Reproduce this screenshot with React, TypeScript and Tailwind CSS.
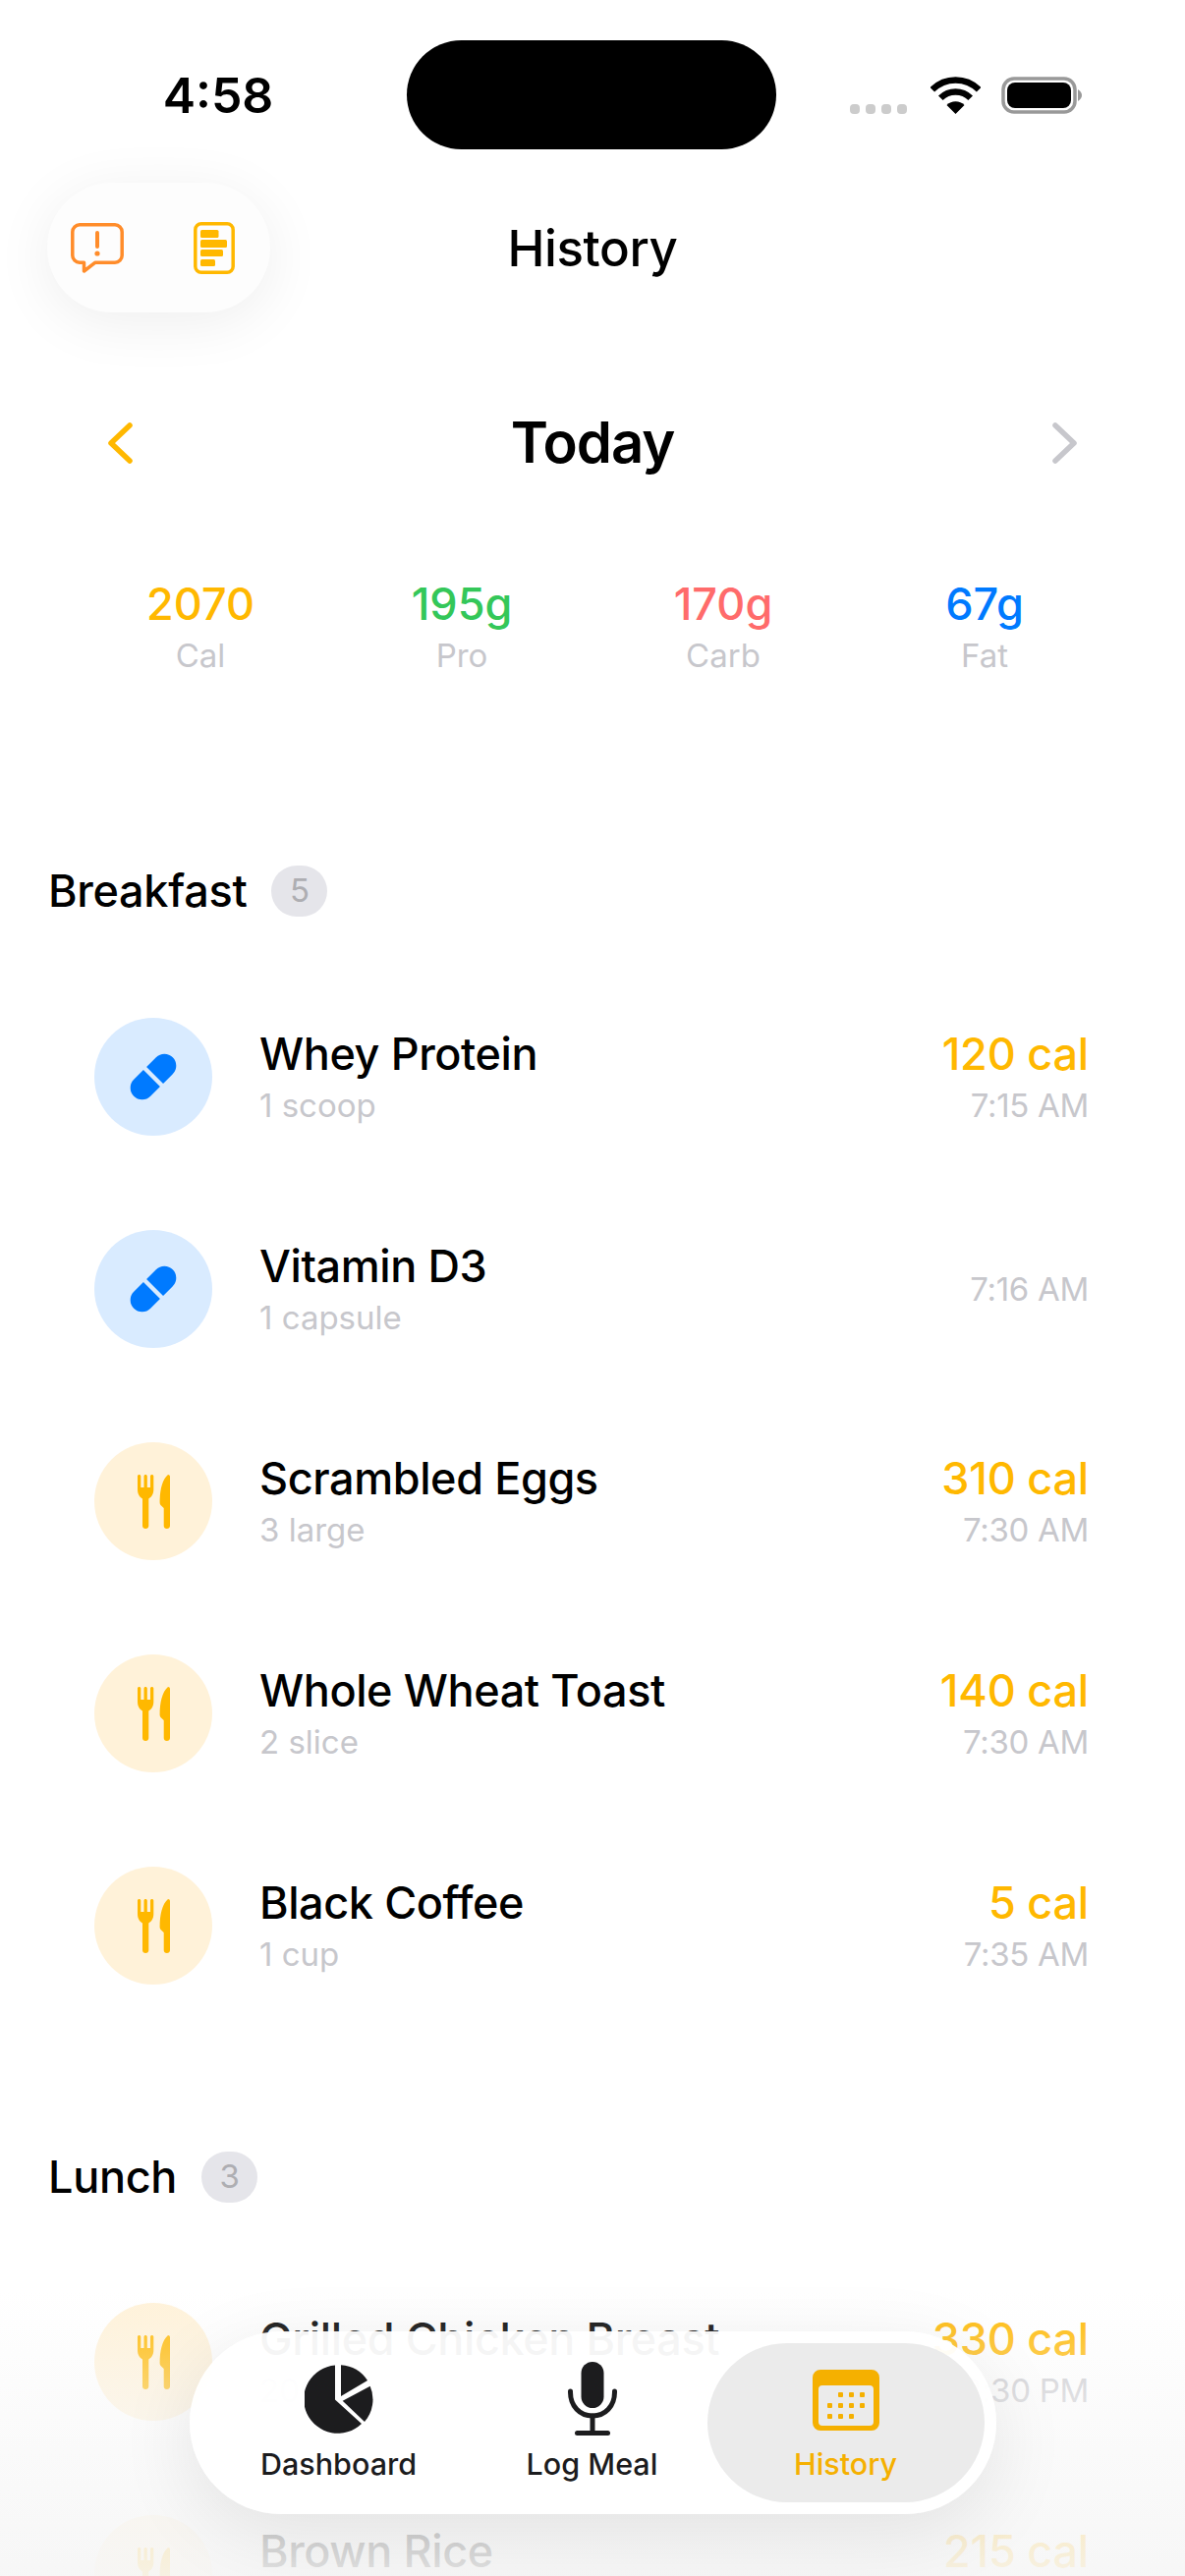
const breakfast = [
  { kind: 'pill', name: 'Whey Protein', sub: '1 scoop', cal: '120 cal', time: '7:15 AM' },
  { kind: 'pill', name: 'Vitamin D3', sub: '1 capsule', cal: '', time: '7:16 AM' },
  { kind: 'food', name: 'Scrambled Eggs', sub: '3 large', cal: '310 cal', time: '7:30 AM' },
  { kind: 'food', name: 'Whole Wheat Toast', sub: '2 slice', cal: '140 cal', time: '7:30 AM' },
  { kind: 'food', name: 'Black Coffee', sub: '1 cup', cal: '5 cal', time: '7:35 AM' },
];

const lunch = [
  { kind: 'food', name: 'Grilled Chicken Breast', sub: '200g', cal: '330 cal', time: '12:30 PM' },
  { kind: 'food', name: 'Brown Rice', sub: '1 cup', cal: '215 cal', time: '12:30 PM' },
];

const stats = [
  { value: '2070', label: 'Cal', color: 'text-[#ffb800]' },
  { value: '195g', label: 'Pro', color: 'text-[#34c759]' },
  { value: '170g', label: 'Carb', color: 'text-[#ff6b6b]' },
  { value: '67g', label: 'Fat', color: 'text-[#007aff]' },
];

function PillIcon() {
  return (
    <svg width="60" height="60" viewBox="-30 -30 60 60" fill="#007aff">
      <g transform="rotate(-45)">
        <path d="M-2.2 -12 H-16 A12 12 0 0 0 -16 12 H-2.2 Z" />
        <path d="M2.2 -12 H16 A12 12 0 0 1 16 12 H2.2 Z" />
      </g>
    </svg>
  );
}

function FoodIcon() {
  return (
    <svg width="33" height="55" viewBox="0 0 33 55" fill="#ffb800">
      <path d="M0 1.6 C0 .7 .7 0 1.6 0 S3.3 .7 3.3 1.6 V13 H6.5 V1.6 C6.5 .7 7.2 0 8.1 0 S9.8 .7 9.8 1.6 V13 H13 V1.6 C13 .7 13.7 0 14.6 0 S16.3 .7 16.3 1.6 V15 C16.3 20 14 23 11.3 24.5 V52 C11.3 53.7 10 55 8.2 55 S5 53.7 5 52 V24.5 C2.3 23 0 20 0 15 Z" />
      <path d="M31 0 C32.2 0 33 .8 33 2 V52 C33 53.7 31.6 55 29.8 55 S26.7 53.7 26.7 52 V34 L24 31.5 C23 30.5 22.6 29.5 22.6 28 C22.6 16 25 5 31 0 Z" />
    </svg>
  );
}

function MealRow({ item }: { item: (typeof breakfast)[number] }) {
  const isPill = item.kind === 'pill';
  return (
    <div className="flex h-[216px] items-center pl-[96px] pr-[98px]">
      <div className={`flex h-[120px] w-[120px] shrink-0 items-center justify-center rounded-full ${isPill ? 'bg-[#d9ebff]' : 'bg-[#fff2d9]'}`}>
        {isPill ? <PillIcon /> : <FoodIcon />}
      </div>
      <div className="ml-[48px] flex-1">
        <div className="text-[45px] leading-[52px] font-[550] tracking-[-0.4px] text-black">{item.name}</div>
        <div className="mt-[6px] text-[33px] leading-[40px] text-[#c7c7cc]">{item.sub}</div>
      </div>
      <div className="flex flex-col items-end">
        {item.cal && <div className="text-[45px] leading-[52px] font-[550] tracking-[-0.2px] text-[#ffb800]">{item.cal}</div>}
        <div className={`text-[33px] leading-[40px] tracking-[-0.3px] text-[#c7c7cc] ${item.cal ? 'mt-[6px]' : ''}`}>{item.time}</div>
      </div>
    </div>
  );
}

function SectionHeader({ title, count }: { title: string; count: number }) {
  return (
    <div className="flex items-center pl-[49px]">
      <span className="text-[45px] leading-[52px] font-[550] tracking-[-0.3px] text-black">{title}</span>
      <span className="ml-[25px] flex h-[52px] w-[57px] items-center justify-center rounded-full bg-[#e5e5ea] text-[33px] text-[#aeaeb2]">{count}</span>
    </div>
  );
}

function NavTab({ label, active, children }: { label: string; active?: boolean; children: React.ReactNode }) {
  return (
    <div className={`flex h-[162px] flex-col items-center justify-end pb-[21px] rounded-full ${active ? 'bg-[#ebebeb]' : ''}`}>
      <div className="flex h-[80px] items-center justify-center">{children}</div>
      <div className={`mt-[8px] text-[30.5px] leading-[36px] font-medium ${active ? 'text-[#f5b000]' : 'text-[#1c1c1e]'}`}>{label}</div>
    </div>
  );
}

export default function App() {
  return (
    <div className="relative h-[2622px] w-[1206px] overflow-hidden bg-white font-[Inter,sans-serif]">
      {/* Status bar */}
      <div className="mt-[41px] flex h-[111px] items-center">
        <div className="w-[414px] pl-[30px] text-center text-[50px] leading-none font-semibold text-black">4:58</div>
        <div className="h-[111px] w-[376px] rounded-[56px] bg-black" />
        <div className="flex flex-1 items-end pl-[75px]">
          <div className="flex gap-[6px]">
            <div className="h-[10px] w-[10px] rounded-[4px] bg-[#cccccc]" />
            <div className="h-[10px] w-[10px] rounded-[4px] bg-[#cccccc]" />
            <div className="h-[10px] w-[10px] rounded-[4px] bg-[#cccccc]" />
            <div className="h-[10px] w-[10px] rounded-[4px] bg-[#cccccc]" />
          </div>
          <svg className="ml-[24px]" width="51" height="38" viewBox="0 0 51 38" fill="none" stroke="#000" strokeWidth="6.5">
            <path d="M1.8 13.3 A33.5 33.5 0 0 1 49.2 13.3" />
            <path d="M10.3 21.8 A21.5 21.5 0 0 1 40.7 21.8" />
            <path d="M25.5 38 L16.5 29 A12.7 12.7 0 0 1 34.5 29 Z" fill="#000" stroke="none" />
          </svg>
          <svg className="ml-[21px]" width="82" height="38" viewBox="0 0 82 38">
            <rect x="2" y="2" width="73" height="34" rx="11" fill="none" stroke="#999999" strokeWidth="3.5" />
            <rect x="6" y="6" width="65" height="26" rx="8" fill="#000" />
            <path d="M78 13 C81 15 82 17 82 19 S81 23 78 25 Z" fill="#999999" />
          </svg>
        </div>
      </div>

      {/* Header */}
      <div className="mt-[34px] grid grid-cols-3 items-center pl-[48px]">
        <div className="flex h-[132px] w-[227px] items-center rounded-full bg-[#fdfdfd] pl-[24px] shadow-[0_10px_60px_rgba(0,0,0,0.07)]">
          <svg width="54" height="51" viewBox="0 0 54 51" fill="none">
            <path d="M9 1.8 H45 C49 1.8 52.2 5 52.2 9 V33 C52.2 37 49 40.2 45 40.2 H25 L13.5 49 V40.2 H9 C5 40.2 1.8 37 1.8 33 V9 C1.8 5 5 1.8 9 1.8 Z" stroke="#ff8c2a" strokeWidth="3.5" strokeLinejoin="round" />
            <path d="M27 10 V24" stroke="#ff8c2a" strokeWidth="4" strokeLinecap="round" />
            <circle cx="27" cy="31" r="2.6" fill="#ff8c2a" />
          </svg>
          <svg className="ml-[71px]" width="42" height="53" viewBox="0 0 42 53" fill="#ffb800">
            <rect x="1.8" y="1.8" width="38.4" height="49.4" rx="6" fill="none" stroke="#ffb800" strokeWidth="3.5" />
            <rect x="7" y="8" width="18.5" height="8" rx="1.5" />
            <rect x="7" y="18" width="27" height="8" rx="1.5" />
            <rect x="7" y="28" width="23" height="7" rx="1.5" />
            <rect x="7" y="38" width="15" height="7" rx="1.5" />
          </svg>
        </div>
        <div className="-ml-[48px] text-center text-[51px] leading-none font-[550] tracking-[-0.4px] text-black">History</div>
      </div>

      {/* Day switcher */}
      <div className="mt-[83px] flex h-[100px] items-center justify-between px-[110px]">
        <svg width="25" height="42" viewBox="0 0 25 42" fill="none" stroke="#ffb800" strokeWidth="5.5" strokeLinecap="round" strokeLinejoin="round">
          <path d="M22 3 L3 21 L22 39" />
        </svg>
        <div className="-mt-[3px] text-[58px] leading-none font-semibold tracking-[-1px] text-black">Today</div>
        <svg width="25" height="42" viewBox="0 0 25 42" fill="none" stroke="#c7c7cc" strokeWidth="5.5" strokeLinecap="round" strokeLinejoin="round">
          <path d="M3 3 L22 21 L3 39" />
        </svg>
      </div>

      {/* Macros */}
      <div className="mt-[89px] grid grid-cols-4 px-[71px] text-center">
        {stats.map((s) => (
          <div key={s.label}>
            <div className={`text-[45px] leading-[50px] font-[550] ${s.color}`}>{s.value}</div>
            <div className="mt-[7px] text-[33px] leading-[40px] text-[#c7c7cc]">{s.label}</div>
          </div>
        ))}
      </div>

      <div className="mt-[194px]">
        <SectionHeader title="Breakfast" count={5} />
      </div>
      <div className="mt-[55px]">
        {breakfast.map((item) => (
          <MealRow key={item.name} item={item} />
        ))}
      </div>

      <div className="mt-[122px]">
        <SectionHeader title="Lunch" count={3} />
      </div>
      <div className="mt-[54px]">
        {lunch.map((item) => (
          <MealRow key={item.name} item={item} />
        ))}
      </div>

      {/* Bottom fade + floating tab bar */}
      <div className="absolute inset-x-0 bottom-0 h-[290px] bg-linear-to-b from-[#f8f8f8]/0 via-[#f8f8f8]/65 to-[#f6f6f6]/92" />
      <div className="absolute inset-x-0 bottom-[63px] flex justify-center">
        <div className="grid h-[186px] w-[821px] grid-cols-[282px_234px_282px] items-center rounded-[93px] bg-white/95 pl-[11px] shadow-[0_20px_80px_rgba(0,0,0,0.09)]">
          <NavTab label="Dashboard">
            <svg width="70" height="70" viewBox="0 0 70 70" fill="#1c1c1e">
              <path d="M31 0.5 V35.5 L58 60 A34.7 34.7 0 1 1 31 0.5 Z" />
              <path d="M37 0.2 V32 L64 16 A34.7 34.7 0 0 0 37 0.2 Z" />
              <path d="M66.7 21.7 L38.7 36.7 L61 58 A34.7 34.7 0 0 0 66.7 21.7 Z" />
            </svg>
          </NavTab>
          <NavTab label="Log Meal">
            <svg width="56" height="78" viewBox="0 0 56 78" fill="none" stroke="#1c1c1e" strokeWidth="5" strokeLinecap="round">
              <rect x="16.5" y="1" width="23" height="47" rx="11.5" fill="#1c1c1e" stroke="none" />
              <path d="M5.5 31 V32 C5.5 46 15 56 28 56 S50.5 46 50.5 32 V31" />
              <path d="M28 56 V73" />
              <path d="M12.5 73.5 H43.5" />
            </svg>
          </NavTab>
          <NavTab label="History" active>
            <svg className="mt-[2px]" width="68" height="62" viewBox="0 0 68 62" fill="#f5b000">
              <path fillRule="evenodd" d="M8 0 H60 A8 8 0 0 1 68 8 V54 A8 8 0 0 1 60 62 H8 A8 8 0 0 1 0 54 V8 A8 8 0 0 1 8 0 Z M10 16 A4 4 0 0 0 6 20 V53 A4 4 0 0 0 10 57 H58 A4 4 0 0 0 62 53 V20 A4 4 0 0 0 58 16 Z" />
              <rect x="26" y="23" width="5" height="5" rx="1" />
              <rect x="37" y="23" width="5" height="5" rx="1" />
              <rect x="48" y="23" width="5" height="5" rx="1" />
              <rect x="15" y="34" width="5" height="5" rx="1" />
              <rect x="26" y="34" width="5" height="5" rx="1" />
              <rect x="37" y="34" width="5" height="5" rx="1" />
              <rect x="48" y="34" width="5" height="5" rx="1" />
              <rect x="15" y="45" width="5" height="5" rx="1" />
              <rect x="26" y="45" width="5" height="5" rx="1" />
              <rect x="37" y="45" width="5" height="5" rx="1" />
            </svg>
          </NavTab>
        </div>
      </div>
    </div>
  );
}
